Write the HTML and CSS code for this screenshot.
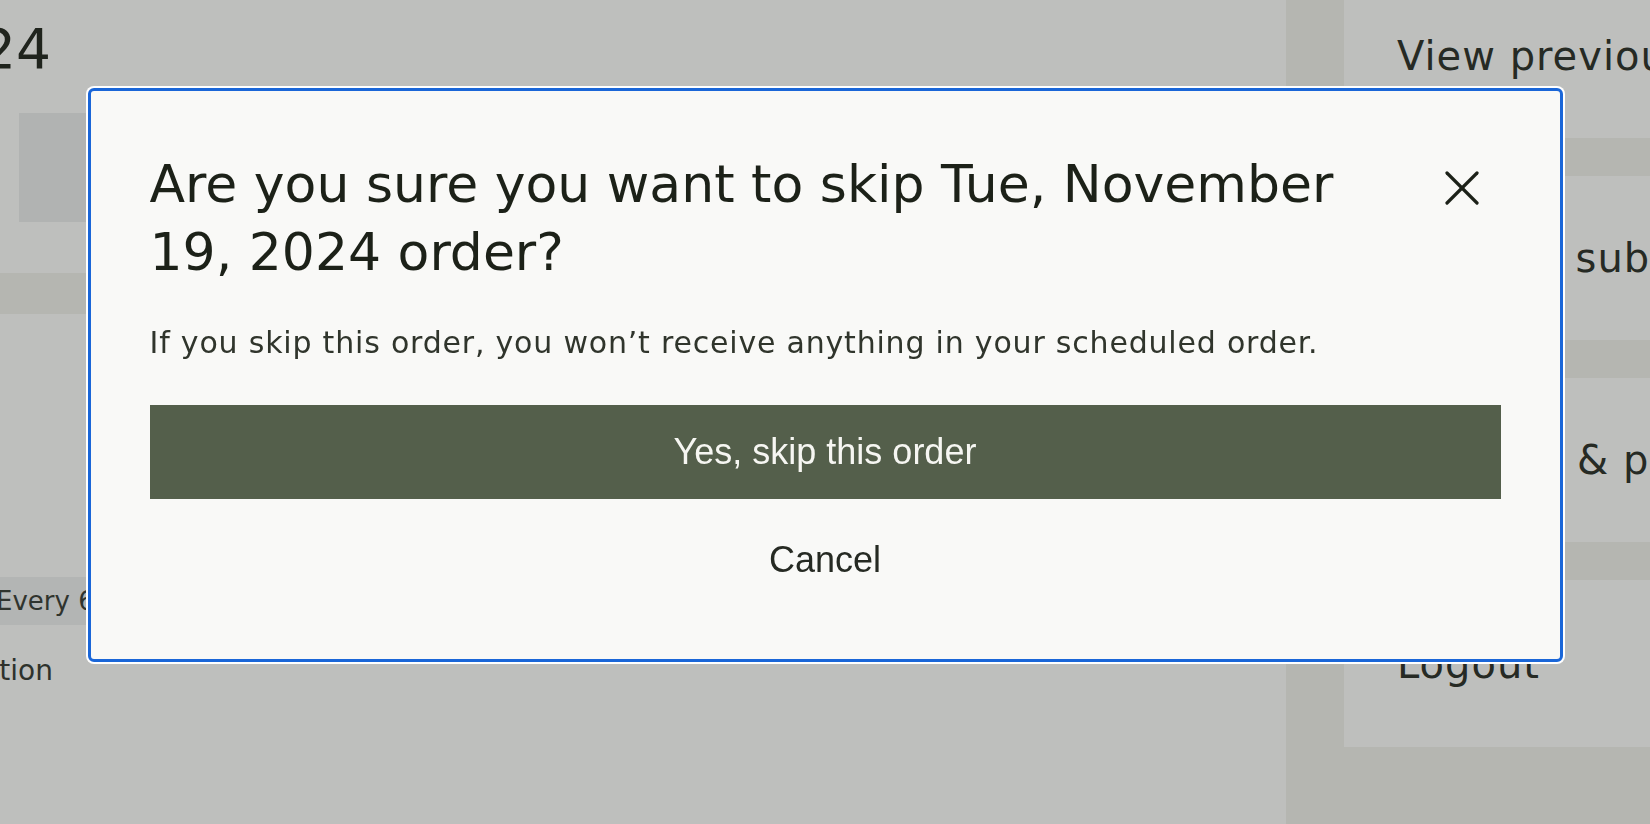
FILE: index.html
```html
<!DOCTYPE html>
<html lang="en">
<head>
<meta charset="utf-8">
<title>Skip order</title>
<link rel="stylesheet" href="styles.css">
</head>
<body>
<div class="page">
  <main class="main">
    <div class="main-inner">
      <h1 class="date-heading">Tue, November 19, 2024</h1>
      <div class="product-thumb"></div>
      <div class="band"></div>
      <div class="frequency"><span class="chip">Every 6 weeks</span></div>
      <a class="sub-link">Edit subscription</a>
    </div>
  </main>
  <aside class="sidebar">
    <nav class="side-panel">
      <a class="side-item">View previous orders</a>
      <a class="side-item">Manage subscriptions</a>
      <a class="side-item">Address &amp; payment</a>
      <a class="side-item">Logout</a>
    </nav>
  </aside>
</div>
<div class="overlay">
  <div class="modal" role="dialog" aria-modal="true">
    <div class="modal-header">
      <h2 class="modal-title">Are you sure you want to skip Tue, November 19, 2024 order?</h2>
      <button class="close-btn" aria-label="Close">
        <svg viewBox="0 0 34 34" width="34" height="34" aria-hidden="true">
          <line x1="2" y1="2" x2="32" y2="32"/>
          <line x1="32" y1="2" x2="2" y2="32"/>
        </svg>
      </button>
    </div>
    <p class="modal-text">If you skip this order, you won’t receive anything in your scheduled order.</p>
    <button class="btn-primary">Yes, skip this order</button>
    <button class="btn-cancel">Cancel</button>
  </div>
</div>
</body>
</html>
```
FILE: styles.css
```css
* { box-sizing: border-box; }

html, body {
  margin: 0;
  padding: 0;
  width: 1650px;
  height: 824px;
  overflow: hidden;
  background: #bebfbd;
  font-family: "DejaVu Sans", "Liberation Sans", sans-serif;
}

.page {
  display: grid;
  grid-template-columns: 1286px 1fr;
  height: 824px;
}

/* ---------- dimmed page behind the dialog ---------- */
.main {
  overflow: hidden;
  background: #bebfbd;
  color: #272b25;
}

.main-inner {
  margin-left: -640px;
  width: 1926px;
}

.date-heading {
  margin: 0;
  padding-top: 16px;
  width: 691px;
  text-align: right;
  white-space: nowrap;
  font-weight: 400;
  font-size: 55px;
  line-height: 66px;
  color: #20241d;
}

.product-thumb {
  margin: 31px 0 0 659px;
  width: 420px;
  height: 109px;
  background: #b1b3b2;
}

.band {
  margin-top: 51px;
  height: 41px;
  background: #b5b6b1;
}

.frequency {
  margin-top: 263px;
  height: 48px;
}

.chip {
  display: inline-block;
  margin-left: 620px;
  padding: 0 16px;
  width: 700px;
  height: 48px;
  line-height: 48px;
  font-size: 26px;
  color: #30342e;
  background: #b3b5b4;
  white-space: nowrap;
}

.sub-link {
  display: block;
  margin-top: 26px;
  width: 693px;
  text-align: right;
  white-space: nowrap;
  font-size: 28px;
  line-height: 40px;
  color: #2e322c;
}

.sidebar {
  background: #b5b6b1;
  padding-left: 58px;
  overflow: hidden;
}

.side-panel {
  display: flex;
  flex-direction: column;
  gap: 38px;
  margin-top: -26px;
}

.side-item {
  display: flex;
  align-items: center;
  height: 164px;
  padding-left: 53px;
  background: #bebfbd;
  font-size: 40px;
  letter-spacing: 1px;
  color: #262a24;
  white-space: nowrap;
}

.side-item:last-child {
  height: 167px;
}

/* ---------- dialog ---------- */
.overlay {
  position: fixed;
  inset: 0;
  display: flex;
  justify-content: center;
  align-items: flex-start;
  padding-top: 88px;
}

.modal {
  width: 1475px;
  padding: 59px 59px 52px;
  background: #f9f9f7;
  border: 3px solid #1a66d8;
  border-radius: 6px;
  box-shadow: 0 0 0 2px #ffffff;
  display: flex;
  flex-direction: column;
}

.modal-header {
  display: flex;
  align-items: flex-start;
}

.modal-title {
  flex: 1;
  margin: 0 40px 0 0;
  font-weight: 400;
  font-size: 52px;
  line-height: 68px;
  color: #1c2118;
}

.close-btn {
  flex: none;
  margin: 21px 22px 0 0;
  padding: 0;
  width: 34px;
  height: 34px;
  border: 0;
  background: transparent;
  cursor: pointer;
}

.close-btn svg {
  display: block;
  stroke: #1c2118;
  stroke-width: 3.2;
  stroke-linecap: round;
}

.modal-text {
  margin: 35px 0 0;
  font-size: 30px;
  line-height: 44px;
  letter-spacing: 0.8px;
  color: #30352c;
}

.btn-primary,
.btn-cancel {
  display: flex;
  align-items: center;
  justify-content: center;
  width: 100%;
  height: 94px;
  padding: 0;
  border: 0;
  font-family: "Liberation Sans", "DejaVu Sans", sans-serif;
  font-size: 36px;
  cursor: pointer;
}

.btn-primary {
  margin-top: 40px;
  background: #545f4b;
  color: #f6f6f2;
}

.btn-cancel {
  margin-top: 14px;
  background: transparent;
  color: #262a23;
}
```
